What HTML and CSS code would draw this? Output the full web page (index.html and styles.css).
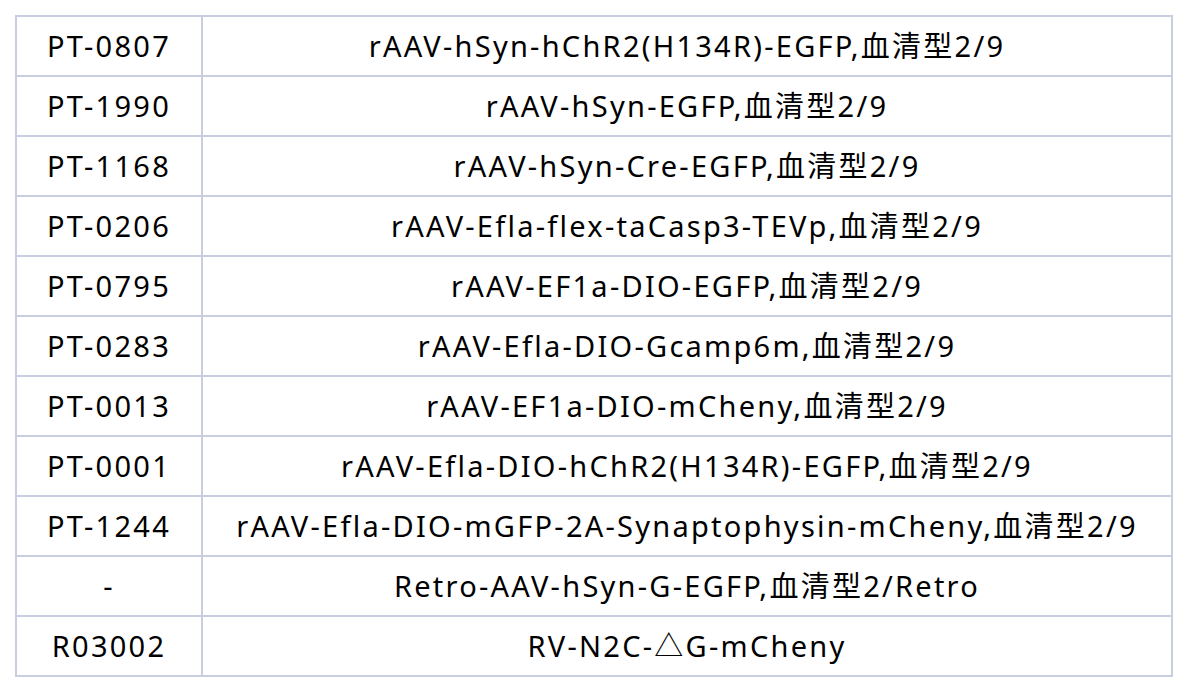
FILE: index.html
```html
<!DOCTYPE html>
<html>
<head>
<meta charset="utf-8">
<link rel="stylesheet" href="styles.css">
</head>
<body>
<table class="grid">
<colgroup><col class="c1"><col class="c2"></colgroup>
<tbody>
<tr><td>PT-0807</td><td>rAAV-hSyn-hChR2(H134R)-EGFP,血清型2/9</td></tr>
<tr><td>PT-1990</td><td>rAAV-hSyn-EGFP,血清型2/9</td></tr>
<tr><td>PT-1168</td><td>rAAV-hSyn-Cre-EGFP,血清型2/9</td></tr>
<tr><td>PT-0206</td><td>rAAV-Efla-flex-taCasp3-TEVp,血清型2/9</td></tr>
<tr><td>PT-0795</td><td>rAAV-EF1a-DIO-EGFP,血清型2/9</td></tr>
<tr><td>PT-0283</td><td>rAAV-Efla-DIO-Gcamp6m,血清型2/9</td></tr>
<tr><td>PT-0013</td><td>rAAV-EF1a-DIO-mCheny,血清型2/9</td></tr>
<tr><td>PT-0001</td><td>rAAV-Efla-DIO-hChR2(H134R)-EGFP,血清型2/9</td></tr>
<tr><td>PT-1244</td><td>rAAV-Efla-DIO-mGFP-2A-Synaptophysin-mCheny,血清型2/9</td></tr>
<tr><td>-</td><td>Retro-AAV-hSyn-G-EGFP,血清型2/Retro</td></tr>
<tr><td>R03002</td><td>RV-N2C-△G-mCheny</td></tr>
</tbody>
</table>
</body>
</html>
```
FILE: styles.css
```css
html, body {
  margin: 0;
  padding: 0;
  background: #ffffff;
}
body {
  padding: 15px 0 0 15px;
  font-family: "Noto Sans", "Noto Sans CJK SC", sans-serif;
  color: #000;
}
.grid {
  border-collapse: collapse;
  width: 1158px;
  table-layout: fixed;
}
.c1 { width: 186px; }
.grid td {
  border: 2px solid #c8cddf;
  height: 58px;
  padding: 0;
  text-align: center;
  vertical-align: middle;
  font-size: 29px;
  letter-spacing: 2.25px;
  line-height: 32px;
  white-space: nowrap;
}
```
